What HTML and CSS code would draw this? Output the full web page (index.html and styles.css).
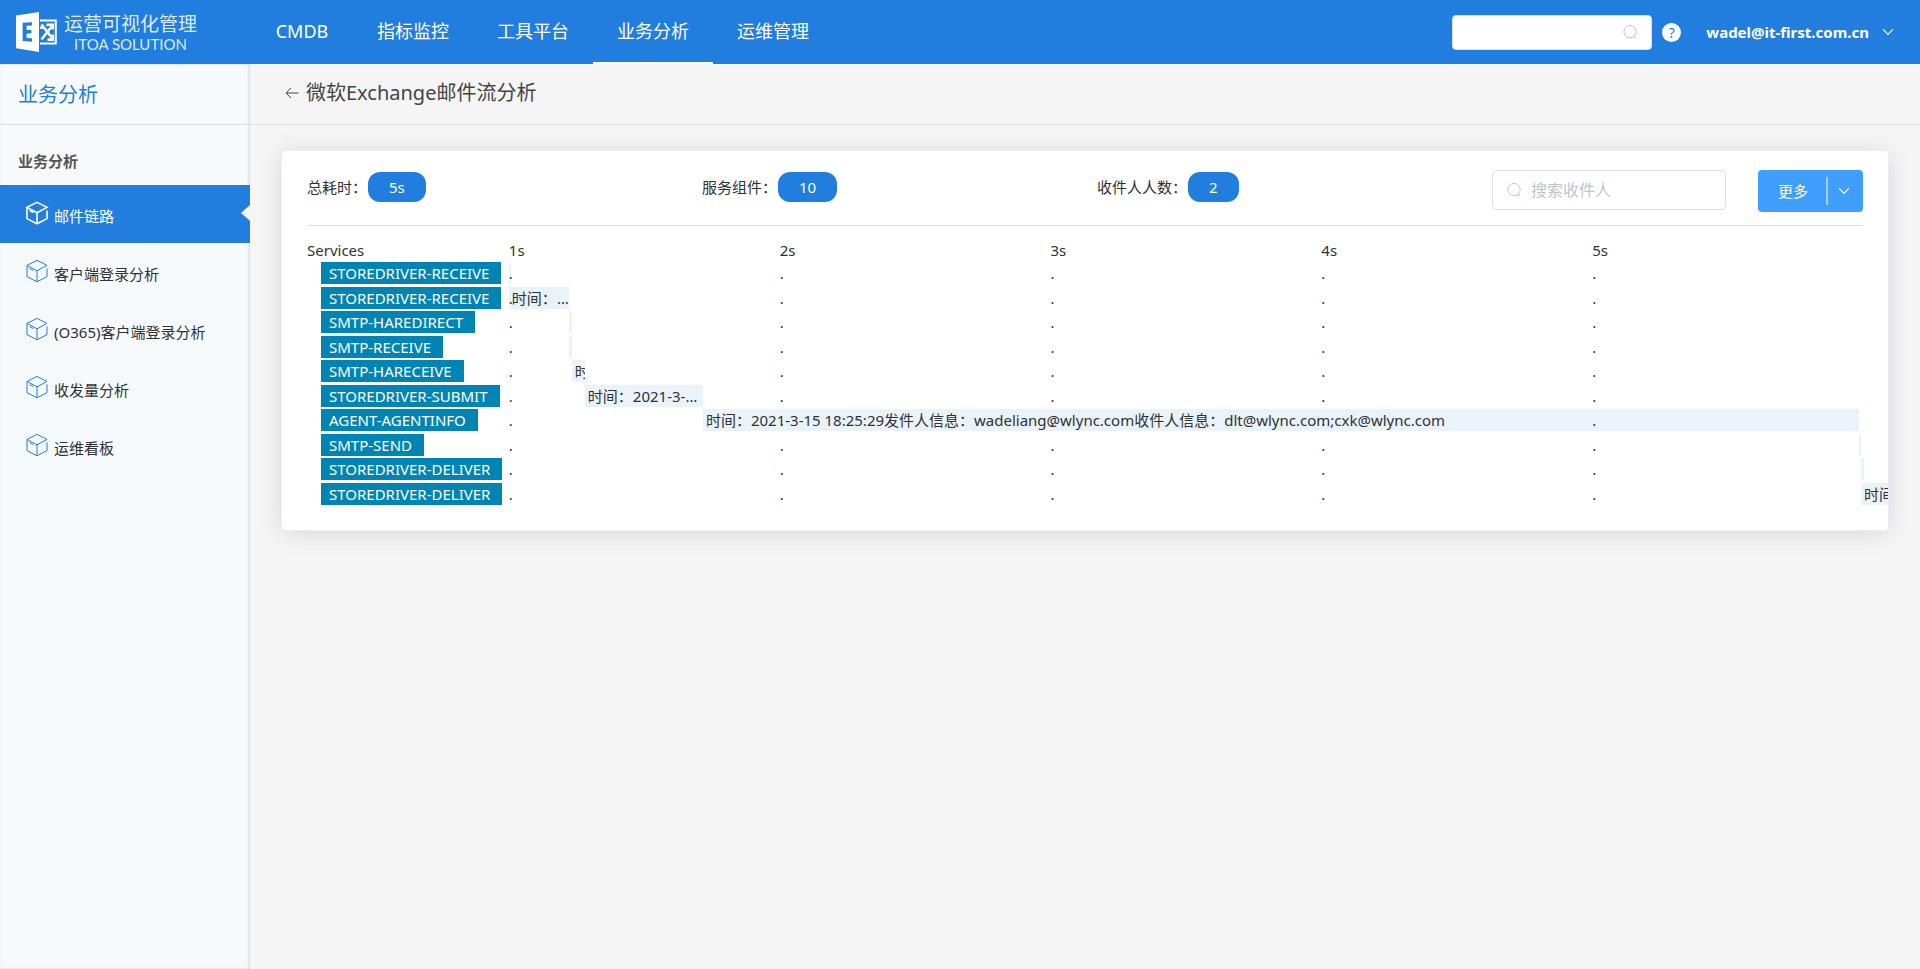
FILE: index.html
```html
<!DOCTYPE html>
<html lang="zh-CN">
<head>
<meta charset="utf-8">
<title>微软Exchange邮件流分析</title>
<link rel="stylesheet" href="styles.css">
</head>
<body>
<svg width="0" height="0" class="sprite" aria-hidden="true">
  <symbol id="cube" viewBox="0 0 24 24">
    <path d="M12 1.4 22 6.4 12 11.8 2 6.4ZM2 6.4V17.6L12 22.8 22 17.6V9.4M12 11.8V22.8M4.6 9.6 8.4 11.6"/>
  </symbol>
  <symbol id="search" viewBox="0 0 14 14">
    <path d="M11 11.2A6.1 6.1 0 1 0 9.4 12.2M10.8 10.9 13.2 13.4M9.2 12.3 11 11.1"/>
  </symbol>
  <symbol id="chevron" viewBox="0 0 12 8">
    <path d="M1 1.2 6 6.4 11 1.2"/>
  </symbol>
</svg>
<header class="topbar">
  <a class="brand" href="#">
    <svg class="brand-mark" viewBox="0 0 42 40" aria-hidden="true">
      <path class="solid" fill-rule="evenodd" d="M0 3.6 23 0V40L0 36.2ZM6.6 10.8V29L16 29.8V26.2L10.6 25.9V21.4H15.4V18H10.6V13.8L16 13.5V10.2Z"/>
      <path class="line" d="M24 8.5H39.8V31.5H24"/>
      <path class="knot" d="M25.5 12.5 36.5 26.5M36.5 13.5 25.5 27.5M30.5 12.8H36.8V17.5M25.5 14.5V17M36.8 22.5V27.6H31.5"/>
    </svg>
    <span class="brand-text"><span class="brand-cn">运营可视化管理</span><span class="brand-en">ITOA SOLUTION</span></span>
  </a>
  <nav class="nav">
    <a href="#">CMDB</a>
    <a href="#">指标监控</a>
    <a href="#">工具平台</a>
    <a href="#" class="active">业务分析</a>
    <a href="#">运维管理</a>
  </nav>
  <div class="tools">
    <label class="field top-search">
      <input type="text" aria-label="搜索">
      <svg class="icon-search" aria-hidden="true"><use href="#search"/></svg>
    </label>
    <button class="help" type="button" aria-label="帮助">?</button>
    <button class="account" type="button">wadel@it-first.com.cn<svg class="icon-chevron" aria-hidden="true"><use href="#chevron"/></svg></button>
  </div>
</header>
<div class="layout">
  <aside class="sidebar">
    <h2 class="side-title">业务分析</h2>
    <h3 class="side-group">业务分析</h3>
    <a href="#" class="side-item active"><svg class="icon-cube" aria-hidden="true"><use href="#cube"/></svg><span>邮件链路</span></a>
    <a href="#" class="side-item"><svg class="icon-cube" aria-hidden="true"><use href="#cube"/></svg><span>客户端登录分析</span></a>
    <a href="#" class="side-item"><svg class="icon-cube" aria-hidden="true"><use href="#cube"/></svg><span>(O365)客户端登录分析</span></a>
    <a href="#" class="side-item"><svg class="icon-cube" aria-hidden="true"><use href="#cube"/></svg><span>收发量分析</span></a>
    <a href="#" class="side-item"><svg class="icon-cube" aria-hidden="true"><use href="#cube"/></svg><span>运维看板</span></a>
  </aside>
  <main class="content">
    <div class="page-head">
      <button class="back" type="button" aria-label="返回"><svg viewBox="0 0 14 12" aria-hidden="true"><path d="M13.5 6H1M6 1 1 6 6 11"/></svg></button>
      <h1>微软Exchange邮件流分析</h1>
    </div>
    <section class="card">
      <div class="summary">
        <div class="stat">总耗时：<span class="pill">5s</span></div>
        <div class="stat">服务组件：<span class="pill">10</span></div>
        <div class="stat">收件人人数：<span class="pill">2</span></div>
        <div class="actions">
          <label class="field rcpt-search">
            <svg class="icon-search" aria-hidden="true"><use href="#search"/></svg>
            <input type="text" placeholder="搜索收件人" aria-label="搜索收件人">
          </label>
          <div class="split">
            <button type="button" class="split-main">更多</button>
            <button type="button" class="split-toggle" aria-label="展开"><svg class="icon-chevron" aria-hidden="true"><use href="#chevron"/></svg></button>
          </div>
        </div>
      </div>
      <div class="line-row axis"><span>Services</span><span>1s</span><span>2s</span><span>3s</span><span>4s</span><span>5s</span></div>
      <div class="timeline">
        <div class="line-row"><span class="tag">STOREDRIVER-RECEIVE</span><div class="track"><span class="bar" style="width:0.15%"></span></div><div class="ticks"><i>.</i><i>.</i><i>.</i><i>.</i><i>.</i></div></div>
        <div class="line-row"><span class="tag">STOREDRIVER-RECEIVE</span><div class="track"><span class="bar text" style="width:4.43%">时间：2021-3-15 18:25:24</span></div><div class="ticks"><i>.</i><i>.</i><i>.</i><i>.</i><i>.</i></div></div>
        <div class="line-row"><span class="tag">SMTP-HAREDIRECT</span><div class="track"><span class="bar" style="margin-left:4.43%;width:0.22%"></span></div><div class="ticks"><i>.</i><i>.</i><i>.</i><i>.</i><i>.</i></div></div>
        <div class="line-row"><span class="tag">SMTP-RECEIVE</span><div class="track"><span class="bar" style="margin-left:4.43%;width:0.22%"></span></div><div class="ticks"><i>.</i><i>.</i><i>.</i><i>.</i><i>.</i></div></div>
        <div class="line-row"><span class="tag">SMTP-HARECEIVE</span><div class="track"><span class="bar text" style="margin-left:4.65%;width:0.96%">时间</span></div><div class="ticks"><i>.</i><i>.</i><i>.</i><i>.</i><i>.</i></div></div>
        <div class="line-row"><span class="tag">STOREDRIVER-SUBMIT</span><div class="track"><span class="bar text" style="margin-left:5.61%;width:8.71%">时间：2021-3-15 18:25:24</span></div><div class="ticks"><i>.</i><i>.</i><i>.</i><i>.</i><i>.</i></div></div>
        <div class="line-row"><span class="tag">AGENT-AGENTINFO</span><div class="track"><span class="bar text" style="margin-left:14.33%;width:85.38%">时间：2021-3-15 18:25:29发件人信息：wadeliang@wlync.com收件人信息：dlt@wlync.com;cxk@wlync.com</span></div><div class="ticks"><i>.</i><i>.</i><i>.</i><i>.</i><i>.</i></div></div>
        <div class="line-row"><span class="tag">SMTP-SEND</span><div class="track"><span class="bar" style="margin-left:99.7%;width:0.15%"></span></div><div class="ticks"><i>.</i><i>.</i><i>.</i><i>.</i><i>.</i></div></div>
        <div class="line-row"><span class="tag">STOREDRIVER-DELIVER</span><div class="track"><span class="bar" style="margin-left:99.85%;width:0.22%"></span></div><div class="ticks"><i>.</i><i>.</i><i>.</i><i>.</i><i>.</i></div></div>
        <div class="line-row"><span class="tag">STOREDRIVER-DELIVER</span><div class="track"><span class="bar text" style="margin-left:99.85%;width:8%">时间：2021-3-15 18:25:29</span></div><div class="ticks"><i>.</i><i>.</i><i>.</i><i>.</i><i>.</i></div></div>
      </div>
    </section>
  </main>
</div>
</body>
</html>
```
FILE: styles.css
```css
* { box-sizing: border-box; }
body {
  margin: 0;
  min-height: 100vh;
  display: flex;
  flex-direction: column;
  background: #f5f5f5;
  color: #303133;
  font: 15px/22px "Noto Sans", "Noto Sans CJK SC", sans-serif;
}
a { color: inherit; text-decoration: none; }
button { border: 0; padding: 0; background: none; color: inherit; font: inherit; white-space: nowrap; }
h1, h2, h3 { margin: 0; font-weight: 400; }
svg { fill: none; stroke: currentColor; flex: none; }
.sprite { display: none; }

.topbar {
  display: flex;
  align-items: center;
  height: 64px;
  background: #217dde;
  color: #fff;
}
.brand { display: flex; align-items: center; width: 251px; padding-left: 16px; gap: 6px; }
.brand-mark { width: 42px; height: 40px; }
.brand-mark .solid { fill: #fff; stroke: none; }
.brand-mark .line { stroke-width: 2; }
.brand-mark .knot { stroke-width: 2.6; }
.brand-text { display: flex; flex-direction: column; align-items: center; color: #dcebfa; }
.brand-cn { font-size: 19px; line-height: 24px; }
.brand-en { font: 15px/16px Lato, sans-serif; }
.nav { display: flex; align-self: stretch; font-size: 18px; }
.nav a { display: flex; align-items: center; justify-content: center; min-width: 102px; padding: 0 24px; border-bottom: 2px solid transparent; }
.nav .active { border-color: #fff; }
.tools { display: flex; align-items: center; margin-left: auto; padding-right: 26px; }
.field {
  display: flex;
  align-items: center;
  gap: 10px;
  background: #fff;
  border: 1px solid #dcdfe6;
  border-radius: 4px;
  color: #c0c4cc;
}
.field input { flex: 1; min-width: 0; border: 0; padding: 0; outline: 0; background: none; font: inherit; color: #606266; }
.field input::placeholder { color: #c0c4cc; }
.top-search { width: 200px; height: 35px; padding: 0 14px; }
.icon-search { width: 14px; height: 14px; }
.icon-chevron { width: 12px; height: 8px; stroke-width: 1.2; }
.help {
  width: 19px;
  height: 19px;
  margin: 0 25px 0 10px;
  border-radius: 50%;
  background: #fff;
  color: #217dde;
  font-size: 14px;
  line-height: 19px;
}
.account { display: flex; align-items: center; gap: 13px; font-weight: 700; }

.layout { display: flex; flex: 1; }
.sidebar { flex: none; width: 250px; background: #f6fafd; box-shadow: inset -1px 0 3px rgba(0, 0, 0, .16); }
.side-title { padding: 20px 18px 18px; border-bottom: 1px solid #dedfe0; color: #217dde; font-size: 20px; }
.side-group { padding: 25px 18px 13px; font-size: 15px; font-weight: 700; color: #555; }
.side-item { display: flex; align-items: center; gap: 5px; height: 58px; padding: 0 0 2px 25px; }
.side-item span { padding-top: 5px; }
.icon-cube { width: 24px; height: 24px; color: #217dde; }
.side-item.active { background: #217dde; color: #fff; }
.side-item.active .icon-cube { color: #fff; stroke-width: 1.6; }
.side-item.active::after {
  content: "";
  margin-left: auto;
  border: 8px solid transparent;
  border-left: 0;
  border-right: 9px solid #f5f5f5;
}

.content { flex: 1; min-width: 0; }
.page-head { display: flex; align-items: center; gap: 7px; padding: 18px 35px 20px; border-bottom: 1px solid #dedfe0; }
.page-head h1 { font-size: 20px; line-height: 22px; color: #444; }
.back { display: flex; color: #444; }
.back svg { width: 14px; height: 12px; }
.card {
  margin: 25px 31px;
  padding: 19px 25px 23px;
  overflow: hidden;
  background: #fff;
  border: 1px solid #ebeef5;
  border-radius: 4px;
  box-shadow: 0 2px 24px rgba(0, 0, 0, .12);
}
.summary {
  display: grid;
  grid-template-columns: repeat(3, minmax(0, 395fr)) minmax(0, 371fr);
  padding-bottom: 13px;
  border-bottom: 1px solid #dedfe0;
}
.stat { display: flex; align-items: center; gap: 1px; height: 34px; }
.pill { padding: 4px 21px; border-radius: 12px; background: #217dde; color: #fff; }
.actions { display: flex; align-items: flex-start; gap: 32px; }
.rcpt-search { flex: 1; min-width: 0; height: 40px; padding: 0 14px; font-size: 16px; }
.split { display: flex; flex: none; align-items: center; height: 42px; border-radius: 4px; background: #409eff; color: #fff; }
.split-main { padding: 0 18px 0 20px; }
.split-toggle { display: flex; align-items: center; height: 28px; padding: 0 13px 0 10px; border-left: 2px solid #a0cfff; }

.line-row { display: grid; grid-template-columns: minmax(0, 202fr) repeat(5, minmax(0, 271fr)); align-items: start; }
.axis { padding: 13px 0 1px; }
.timeline { display: grid; grid-auto-rows: 1fr; min-height: 245px; }
.tag { grid-area: 1 / 1; justify-self: start; margin-left: 14px; padding: 0 12px 0 8px; background: #0084b4; color: #fff; white-space: nowrap; }
.track { grid-area: 1 / 2 / 2 / 7; display: flex; min-width: 0; }
.ticks { grid-area: 1 / 2 / 2 / 7; display: grid; grid-template-columns: repeat(5, 1fr); }
.ticks i { font-style: normal; }
.bar { flex: none; height: 22px; background: #ebf3fa; }
.bar.text { padding-left: 3px; overflow: hidden; white-space: nowrap; text-overflow: ellipsis; }
```
